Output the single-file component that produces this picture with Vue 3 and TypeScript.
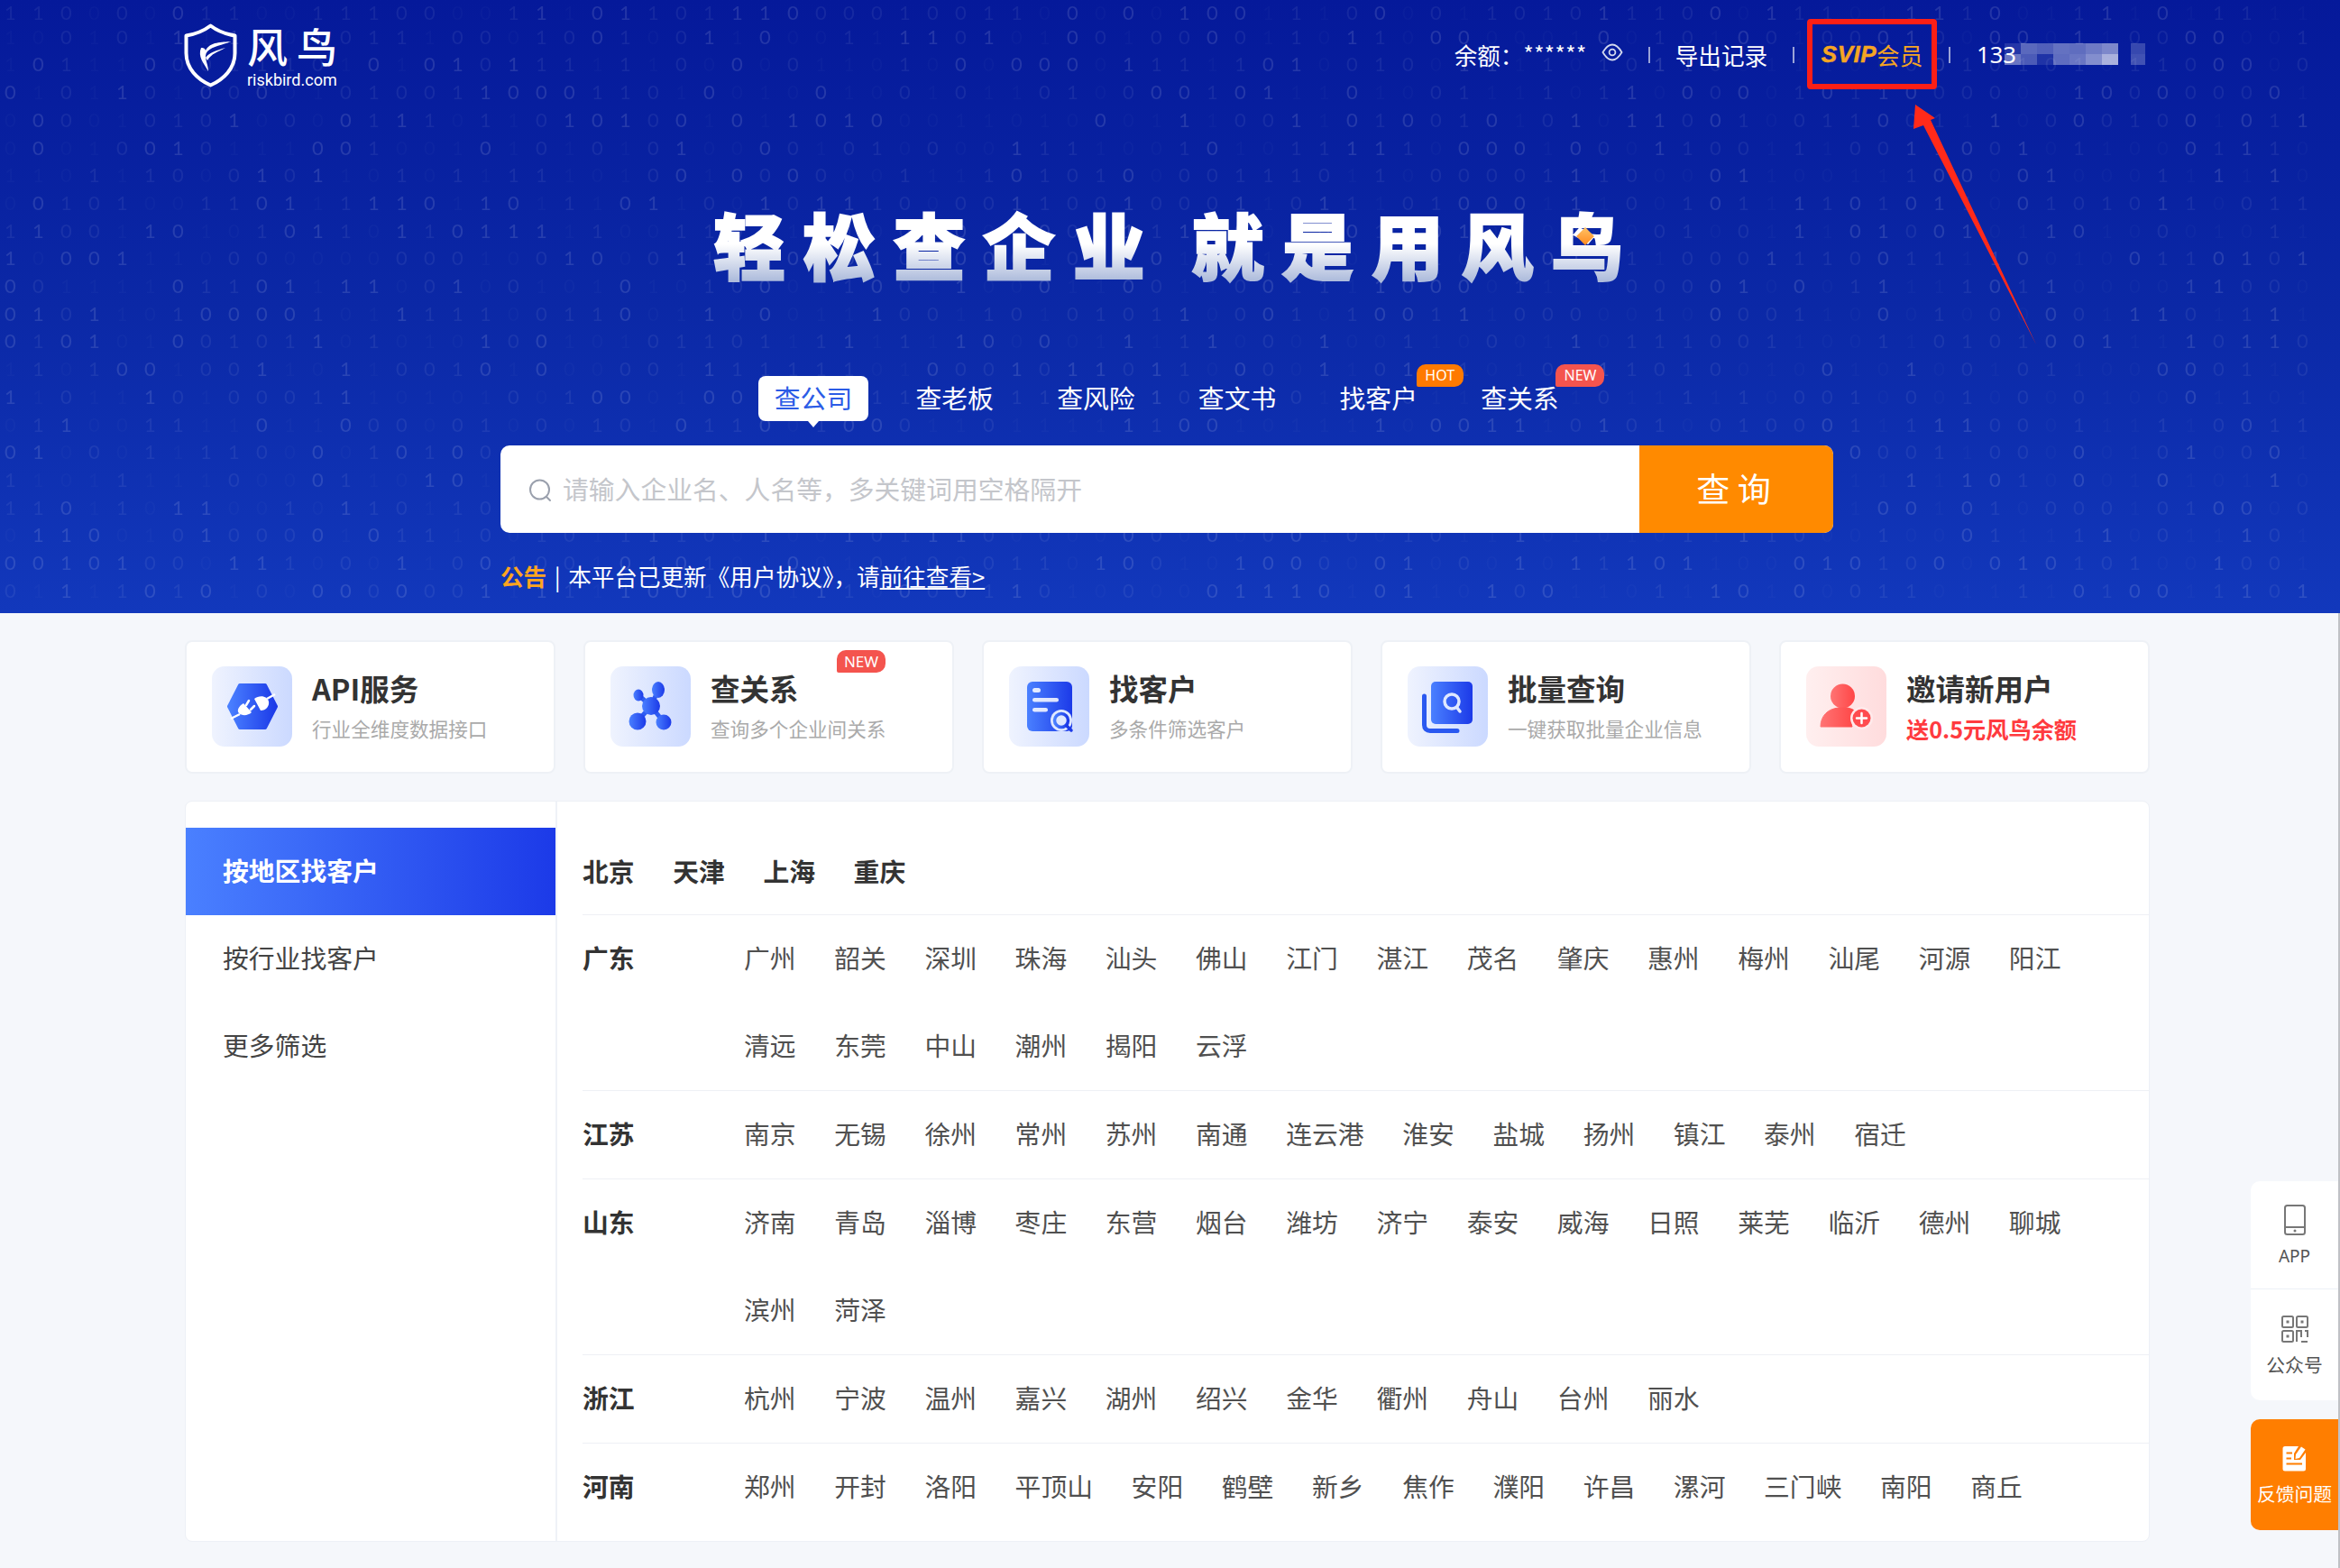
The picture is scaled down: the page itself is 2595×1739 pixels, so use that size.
<script setup lang="ts">
import { computed } from 'vue'

interface QuickCard { title: string; sub: string; icon: string; hot?: boolean; red?: boolean }
interface Region { name: string; cities: string[] }
interface Glyph { x: number; d: string; a: number }
interface GlyphRow { y: number; glyphs: Glyph[] }

const tabs: string[] = ['查公司', '查老板', '查风险', '查文书', '找客户', '查关系']
const cards: QuickCard[] = [
  { title: 'API服务', sub: '行业全维度数据接口', icon: 'api' },
  { title: '查关系', sub: '查询多个企业间关系', icon: 'rel', hot: true },
  { title: '找客户', sub: '多条件筛选客户', icon: 'doc' },
  { title: '批量查询', sub: '一键获取批量企业信息', icon: 'batch' },
  { title: '邀请新用户', sub: '送0.5元风鸟余额', icon: 'user', red: true },
]
const sideItems: string[] = ['按地区找客户', '按行业找客户', '更多筛选']
const towns: string[] = ['北京', '天津', '上海', '重庆']
const regions: Region[] = [
  { name: '广东', cities: ['广州', '韶关', '深圳', '珠海', '汕头', '佛山', '江门', '湛江', '茂名', '肇庆', '惠州', '梅州', '汕尾', '河源', '阳江', '清远', '东莞', '中山', '潮州', '揭阳', '云浮'] },
  { name: '江苏', cities: ['南京', '无锡', '徐州', '常州', '苏州', '南通', '连云港', '淮安', '盐城', '扬州', '镇江', '泰州', '宿迁'] },
  { name: '山东', cities: ['济南', '青岛', '淄博', '枣庄', '东营', '烟台', '潍坊', '济宁', '泰安', '威海', '日照', '莱芜', '临沂', '德州', '聊城', '滨州', '菏泽'] },
  { name: '浙江', cities: ['杭州', '宁波', '温州', '嘉兴', '湖州', '绍兴', '金华', '衢州', '舟山', '台州', '丽水'] },
  { name: '河南', cities: ['郑州', '开封', '洛阳', '平顶山', '安阳', '鹤壁', '新乡', '焦作', '濮阳', '许昌', '漯河', '三门峡', '南阳', '商丘'] },
]

const binary = computed<GlyphRow[]>(() => {
  let seed = 20240611
  const rnd = (): number => {
    seed = (seed * 1664525 + 1013904223) % 4294967296
    return seed / 4294967296
  }
  const rows: GlyphRow[] = []
  for (let r = 0; r < 22; r++) {
    const glyphs: Glyph[] = []
    for (let c = 0; c < 83; c++) {
      const p = rnd()
      const a = p < 0.35 ? 0.025 : p < 0.72 ? 0.065 : 0.12
      glyphs.push({ x: 5 + c * 31, d: rnd() < 0.5 ? '0' : '1', a })
    }
    rows.push({ y: r === 0 ? 22 : 18 + r * 30.7, glyphs })
  }
  return rows
})

const mosaic: { x: number; y: number; a: number }[] = [
  { x: 0, y: 0, a: 0.12 }, { x: 18, y: 0, a: 0.34 }, { x: 36, y: 0, a: 0.3 }, { x: 54, y: 0, a: 0.38 }, { x: 72, y: 0, a: 0.36 }, { x: 90, y: 0, a: 0.42 }, { x: 108, y: 0, a: 0.48 }, { x: 140, y: 0, a: 0.2 },
  { x: 0, y: 12, a: 0.4 }, { x: 18, y: 12, a: 0.28 }, { x: 36, y: 12, a: 0.1 }, { x: 54, y: 12, a: 0.36 }, { x: 72, y: 12, a: 0.4 }, { x: 90, y: 12, a: 0.5 }, { x: 108, y: 12, a: 0.66 }, { x: 140, y: 12, a: 0.24 },
]
</script>

<template>
  <div class="page">
    <section class="hero">
      <svg class="binary" width="2595" height="680" aria-hidden="true">
        <text v-for="(row, r) in binary" :key="r" :y="row.y" fill="#fff" font-size="22" font-family="Lato, sans-serif"><tspan v-for="g in row.glyphs" :key="g.x" :x="g.x" :fill-opacity="g.a">{{ g.d }}</tspan></text>
      </svg>

      <header class="top">
        <div class="logo">
          <svg class="shield" width="59" height="71" viewBox="0 0 59 71">
            <path d="M29.5 2.5C38 9 47 12 56.5 13.5V33C56.5 50 44 62 29.5 68.5C15 62 2.5 50 2.5 33V13.5C12 12 21 9 29.5 2.5Z" fill="none" stroke="#fff" stroke-width="4" stroke-linejoin="round" />
            <path d="M19 27C15 37 22 44 27 53C27 44 21 37 26 31C32 25 43 24 52 20C42 21 29 20 24 30C23 27 21 27 19 27Z" fill="#fff" />
            <path d="M24 38C28 32 36 30 46 27C37 32 31 33 26 41Z" fill="#fff" />
          </svg>
          <div class="logo-text">
            <div class="logo-cn">风鸟</div>
            <div class="logo-en">riskbird.com</div>
          </div>
        </div>
        <div class="account">
          <span class="balance">余额&#xFF1A;</span>
          <span class="stars">******</span>
          <svg class="eye" width="24" height="20" viewBox="0 0 24 20">
            <path d="M1.5 10C5 4 8 1.5 12 1.5S19 4 22.5 10C19 16 16 18.5 12 18.5S5 16 1.5 10Z" fill="none" stroke="#d3d9ee" stroke-width="1.8" />
            <circle cx="12" cy="10" r="3.4" fill="none" stroke="#d3d9ee" stroke-width="1.8" />
          </svg>
          <i class="sep sep-a"></i>
          <span class="export">导出记录</span>
          <i class="sep sep-b"></i>
          <div class="svip"><b>SVIP</b><span>会员</span></div>
          <i class="sep sep-c"></i>
          <span class="phone">133</span>
          <svg class="blur" width="156" height="24" viewBox="0 0 156 24">
            <rect v-for="(m, i) in mosaic" :key="i" :x="m.x" :y="m.y" width="18" height="12" fill="#fff" :fill-opacity="m.a" />
          </svg>
        </div>
      </header>

      <div class="title-wrap">
        <h1 class="title">轻松查企业 就是用风鸟</h1>
        <i class="diamond"></i>
      </div>

      <div class="search-area">
        <div class="tabs">
          <div v-for="(t, i) in tabs" :key="t" class="tab" :class="{ on: i === 0 }">
            {{ t }}
            <span v-if="i === 4" class="pill hot">HOT</span>
            <span v-if="i === 5" class="pill new">NEW</span>
          </div>
        </div>
        <div class="search">
          <svg class="lens" width="27" height="26" viewBox="0 0 27 26">
            <circle cx="12.5" cy="12" r="10.5" fill="none" stroke="#9aa0ad" stroke-width="2" />
            <path d="M20 20l4 4" stroke="#9aa0ad" stroke-width="2" stroke-linecap="round" />
          </svg>
          <span class="placeholder">请输入企业名、人名等&#xFF0C;多关键词用空格隔开</span>
          <button class="go">查 询</button>
        </div>
        <p class="notice"><b>公告</b><span class="bar">|</span>本平台已更新《用户协议》&#xFF0C;请<u>前往查看&gt;</u></p>
      </div>
    </section>

    <svg class="arrow" width="160" height="280" viewBox="2110 110 160 280" aria-hidden="true">
      <polygon points="2124,116 2146,131 2141,133 2258,382 2133,139 2122,143" fill="#ff2a1a" />
    </svg>

    <section class="cards">
      <article v-for="c in cards" :key="c.title" class="card">
        <div class="ico" :class="{ redbg: c.red }">
          <svg width="89" height="89" viewBox="0 0 89 89">
            <defs>
              <linearGradient id="bl" x1="0" y1="0" x2="1" y2="0"><stop offset="0" stop-color="#4a80ff" /><stop offset="1" stop-color="#1c3ae8" /></linearGradient>
              <linearGradient id="rd" x1="0" y1="0" x2="1" y2="0"><stop offset="0" stop-color="#ff7474" /><stop offset="1" stop-color="#ff4646" /></linearGradient>
            </defs>
            <g v-if="c.icon === 'api'">
              <path d="M31 21H59L71 44.500L59 68H31L19 44.500Z" fill="url(#bl)" stroke="url(#bl)" stroke-width="4" stroke-linejoin="round" />
              <path d="M47 36L54 49C60 49 64 44 63 39C62 33 53 31 47 36Z" fill="#fff" />
              <path d="M61 36L70 31" stroke="#fff" stroke-width="2.500" />
              <path d="M35 41L44 51C40 55 33 55 30 52C27 49 30 44 35 41Z" fill="#fff" />
              <path d="M38 43L41 38M43 48L47 44" stroke="#fff" stroke-width="2.500" stroke-linecap="round" />
              <path d="M31 53L21 58" stroke="#fff" stroke-width="2.500" />
            </g>
            <g v-else-if="c.icon === 'rel'">
              <path d="M45 44L53 26M45 44L31 32M45 44L30 61M45 44L59 62" stroke="#2f5cf2" stroke-width="5" fill="none" />
              <g fill="url(#bl)">
                <circle cx="45" cy="44" r="10" />
                <ellipse cx="53" cy="26" rx="7" ry="9" />
                <ellipse cx="31" cy="32" rx="5.500" ry="6.500" />
                <circle cx="30" cy="61" r="9.500" />
                <circle cx="59" cy="62" r="8.500" />
              </g>
            </g>
            <g v-else-if="c.icon === 'doc'">
              <rect x="20" y="17" width="50" height="55" rx="6" fill="url(#bl)" />
              <rect x="26" y="24" width="9" height="5" rx="2.500" fill="#fff" fill-opacity=".85" />
              <rect x="26" y="35" width="29" height="4.500" rx="2.250" fill="#fff" fill-opacity=".85" />
              <rect x="26" y="46" width="17" height="4.500" rx="2.250" fill="#fff" fill-opacity=".85" />
              <circle cx="58" cy="60" r="12" fill="#dfe8ff" />
              <circle cx="58" cy="60" r="7.500" fill="#dfe8ff" stroke="url(#bl)" stroke-width="3.500" />
              <path d="M64 66L69 71" stroke="#1c3ae8" stroke-width="3.500" stroke-linecap="round" />
            </g>
            <g v-else-if="c.icon === 'batch'">
              <path d="M18.500 33V65C18.500 69 21 71.500 25 71.500H55" fill="none" stroke="#2a58f0" stroke-width="5" stroke-linecap="round" />
              <rect x="26" y="17" width="46" height="47" rx="5" fill="url(#bl)" />
              <circle cx="49" cy="39" r="8" fill="none" stroke="#dfe8ff" stroke-width="3.500" />
              <path d="M55 46L58 50" stroke="#dfe8ff" stroke-width="3.500" stroke-linecap="round" />
            </g>
            <g v-else>
              <circle cx="40.500" cy="33" r="13.500" fill="url(#rd)" />
              <path d="M16 67C16 55 24 47 36 46H46C50 47 53 48 54 50C50 56 49 62 51 67Z" fill="url(#rd)" stroke="url(#rd)" stroke-width="1" stroke-linejoin="round" />
              <circle cx="61.500" cy="57.500" r="12.500" fill="#ffeaeb" />
              <circle cx="61.500" cy="57.500" r="10" fill="#ff4c4f" />
              <path d="M61.500 52V63M56 57.500H67" stroke="#fff" stroke-width="2.500" stroke-linecap="round" />
            </g>
          </svg>
        </div>
        <div class="card-text">
          <h3>{{ c.title }}</h3>
          <p :class="{ redtext: c.red }">{{ c.sub }}</p>
        </div>
        <span v-if="c.hot" class="pill card-new">NEW</span>
      </article>
    </section>

    <section class="panel">
      <aside class="side">
        <div v-for="(s, i) in sideItems" :key="s" class="side-item" :class="{ on: i === 0 }">{{ s }}</div>
      </aside>
      <div class="regions">
        <div class="row towns">
          <strong v-for="t in towns" :key="t">{{ t }}</strong>
        </div>
        <div v-for="r in regions" :key="r.name" class="row">
          <strong class="label">{{ r.name }}</strong>
          <div class="cities"><span v-for="c in r.cities" :key="c">{{ c }}</span></div>
        </div>
      </div>
    </section>

    <aside class="float">
      <div class="float-box">
        <div class="float-item first">
          <svg width="24" height="34" viewBox="0 0 24 34">
            <rect x="1" y="1" width="22" height="32" rx="2.500" fill="none" stroke="#777" stroke-width="2" />
            <path d="M1 25H23" stroke="#777" stroke-width="2" />
            <circle cx="12" cy="29" r="1.500" fill="#777" />
          </svg>
          <span>APP</span>
        </div>
        <div class="float-item second">
          <svg width="30" height="30" viewBox="0 0 30 30" fill="none" stroke="#777" stroke-width="2">
            <rect x="1" y="1" width="12" height="12" rx="1.500" />
            <rect x="17" y="1" width="12" height="12" rx="1.500" />
            <rect x="1" y="17" width="12" height="12" rx="1.500" />
            <path d="M17 29V17H22V24M26 17H29V24M22 29H29" />
            <g fill="#777" stroke="none"><rect x="5.500" y="5.500" width="3" height="3" /><rect x="21.500" y="5.500" width="3" height="3" /><rect x="5.500" y="21.500" width="3" height="3" /></g>
          </svg>
          <span>公众号</span>
        </div>
      </div>
      <div class="float-feedback">
        <svg width="27" height="30" viewBox="0 0 27 30">
          <path d="M3 2H18L13 10V17H20L26 9V27A2.500 2.500 0 0 1 23.500 29.500H3A2.500 2.500 0 0 1 .5 27V4.500A2.500 2.500 0 0 1 3 2Z" fill="#fff" />
          <path d="M15 11L21 2.500L25.500 5.500L19 15L14.500 16Z" fill="#fff" />
          <path d="M4.500 9.500H11M4.500 15.500H10M4.500 21.500H22" stroke="#ff7e00" stroke-width="2" />
        </svg>
        <span>反馈问题</span>
      </div>
    </aside>
    <i class="edge"></i>
  </div>
</template>

<style>
html, body { margin: 0; overflow: hidden; background: #f5f7fb; }
</style>

<style scoped>
.page { position: relative; width: 2595px; height: 1739px; overflow: hidden; background: #f5f7fb; font-family: "Noto Sans CJK SC", "Noto Sans", sans-serif; color: #333; }
.hero { position: relative; height: 680px; overflow: hidden; background: linear-gradient(180deg, #05199a 0%, #0b28a6 50%, #1238bc 100%); color: #fff; }
.binary { position: absolute; left: 0; top: 0; filter: blur(.6px); }
.top { position: relative; display: flex; align-items: center; justify-content: space-between; height: 120px; padding: 0 216px 0 204px; }
.logo { display: flex; gap: 11px; align-items: flex-start; margin-top: 5px; }
.logo-text { display: flex; flex-direction: column; }
.logo-cn { font-size: 45px; line-height: 52px; letter-spacing: 10px; white-space: nowrap; margin-top: -1px; font-weight: 500; }
.logo-en { font-family: Roboto, sans-serif; font-size: 18px; line-height: 20px; margin-top: 2px; }
.account { display: flex; align-items: center; font-size: 25.600px; white-space: nowrap; }
.stars { font-size: 24px; letter-spacing: .5px; margin-top: -3px; }
.eye { margin-left: 16px; margin-top: -4px; }
.sep { display: block; width: 2px; height: 18px; background: rgba(255, 255, 255, .6); }
.sep-a { margin: 2px 28px 0 28px; }
.sep-b { margin: 2px 14px 0 28px; }
.sep-c { margin: 2px 29px 0 13px; }
.svip { display: flex; align-items: center; justify-content: center; box-sizing: border-box; width: 144px; height: 78px; border: 6px solid #fb1f16; border-radius: 4px; color: #f5a523; }
.svip b { font-family: "Liberation Sans", sans-serif; font-style: italic; font-size: 26px; letter-spacing: .5px; -webkit-text-stroke: .5px #f5a523; }
.phone { font-family: "Noto Sans", sans-serif; }
.blur { margin-left: -13px; }
.title-wrap { position: relative; margin-top: 99px; height: 100px; }
.title { margin: 0; padding-left: 16px; text-align: center; font-size: 80px; line-height: 100px; font-weight: 900; letter-spacing: 19.700px; word-spacing: -6px; white-space: pre; background: linear-gradient(180deg, #fff 52%, #aebcdc 92%); -webkit-background-clip: text; background-clip: text; color: transparent; -webkit-text-stroke: 2px transparent; }
.diamond { position: absolute; left: 1751px; top: 36px; width: 14px; height: 14px; transform: rotate(45deg); background: linear-gradient(135deg, #ffc266, #ff8a1e); }
.search-area { position: relative; width: 1478px; margin: 98px 0 0 555px; }
.tabs { display: flex; gap: 34.700px; margin-left: 286px; }
.tab { position: relative; width: 122px; height: 50px; line-height: 47px; text-align: center; font-size: 28.800px; border-radius: 8px; white-space: nowrap; }
.tab.on { background: #fff; color: #2b5ce6; }
.tab.on::after { content: ""; position: absolute; left: 55px; bottom: -7px; border: 6px solid transparent; border-bottom: 0; border-top: 7px solid #fff; }
.pill { position: absolute; display: block; color: #fff; text-align: center; font-size: 16px; line-height: 25px; height: 25px; border-radius: 10px 10px 10px 2px; font-family: "Noto Sans", sans-serif; }
.pill.hot { left: 103px; top: -13px; width: 52px; background: #ff7a00; }
.pill.new { left: 101px; top: -13px; width: 54px; background: #f4544e; }
.search { display: flex; align-items: center; height: 97px; margin-top: 27px; background: #fff; border-radius: 10px; overflow: hidden; }
.lens { margin: 2px 0 0 31px; }
.placeholder { flex: 1; margin: -3px 0 0 11px; font-size: 28.800px; color: #c4c6cb; }
.go { width: 215px; height: 100%; padding: 0 6px 4px 0; border: 0; background: #ff8a00; color: #fff; font: inherit; font-size: 37px; }
.notice { margin: 28px 0 0; font-size: 25.600px; line-height: 40px; white-space: nowrap; }
.notice b { color: #ffa51e; font-weight: 700; }
.bar { margin: 0 8.500px; }
.arrow { position: absolute; left: 2110px; top: 110px; }
.cards { display: flex; gap: 31px; margin: 30px 0 0 205px; width: 2179px; }
.card { position: relative; flex: 1; display: flex; align-items: flex-start; box-sizing: border-box; height: 148px; padding: 27px 27px 27px 28px; background: #fff; border: 2px solid #eef1f6; border-radius: 8px; }
.ico { width: 89px; height: 89px; flex: none; border-radius: 14px; background: linear-gradient(90deg, #eff3fe, #cbd9ff); }
.ico.redbg { background: linear-gradient(90deg, #ffefef, #ffdcdd); }
.card-text { margin-left: 22px; }
.card-text h3 { margin: 1.500px 0 0; font-size: 32.500px; line-height: 44px; font-weight: 700; white-space: nowrap; color: #333; }
.card-text p { margin: 8px 0 0; font-size: 21.600px; line-height: 30px; color: #aaa; white-space: nowrap; }
.card-text p.redtext { color: #ff3b3f; font-size: 25.200px; font-weight: 700; }
.pill.card-new { left: 279px; top: 9px; width: 54px; background: #f4544e; font-size: 17px; }
.panel { display: flex; box-sizing: border-box; width: 2179px; height: 822px; margin: 30px 0 0 205px; background: #fff; border: 1px solid #edf0f6; border-radius: 8px; }
.side { width: 412px; flex: none; box-sizing: border-box; padding-top: 29px; border-right: 2px solid #eff2f7; }
.side-item { height: 97px; line-height: 94px; padding-left: 41px; font-size: 28.800px; color: #444; }
.side-item.on { background: linear-gradient(90deg, #4a80ff, #1c3ae8); color: #fff; font-weight: 700; }
.regions { flex: 1; padding: 29px 0 0 28px; }
.row { display: flex; border-bottom: 1px solid #eef0f5; font-size: 28.800px; line-height: 94px; }
.row:last-child { border-bottom: 0; }
.towns { gap: 42.600px; height: 96px; line-height: 95px; }
.row strong { font-weight: 700; color: #333; }
.label { flex: none; width: 179px; }
.cities { display: flex; flex-wrap: wrap; column-gap: 42.600px; padding-right: 30px; color: #505050; }
.cities span { height: 97px; }
.float { position: absolute; left: 2496px; top: 1310px; width: 97px; display: flex; flex-direction: column; gap: 21px; }
.float-box { background: #fff; border-radius: 10px 0 0 10px; }
.float-item { box-sizing: border-box; display: flex; flex-direction: column; align-items: center; font-size: 20.800px; color: #555; }
.float-item.first { height: 120px; padding-top: 26px; border-bottom: 1px solid #edf0f6; }
.float-item.first span { font-family: "Noto Sans", sans-serif; margin-top: 8px; font-size: 19px; line-height: 30px; }
.float-item.second { height: 123px; padding-top: 29px; }
.float-item.second span { margin-top: 9px; line-height: 30px; }
.float-feedback { box-sizing: border-box; display: flex; flex-direction: column; align-items: center; height: 123px; padding-top: 28px; background: #ff7e00; color: #fff; border-radius: 10px 0 0 10px; font-size: 20.800px; white-space: nowrap; }
.float-feedback span { margin-top: 9px; line-height: 30px; }
.edge { position: absolute; right: 0; top: 680px; bottom: 0; width: 2px; background: #bfc1c5; }
</style>
